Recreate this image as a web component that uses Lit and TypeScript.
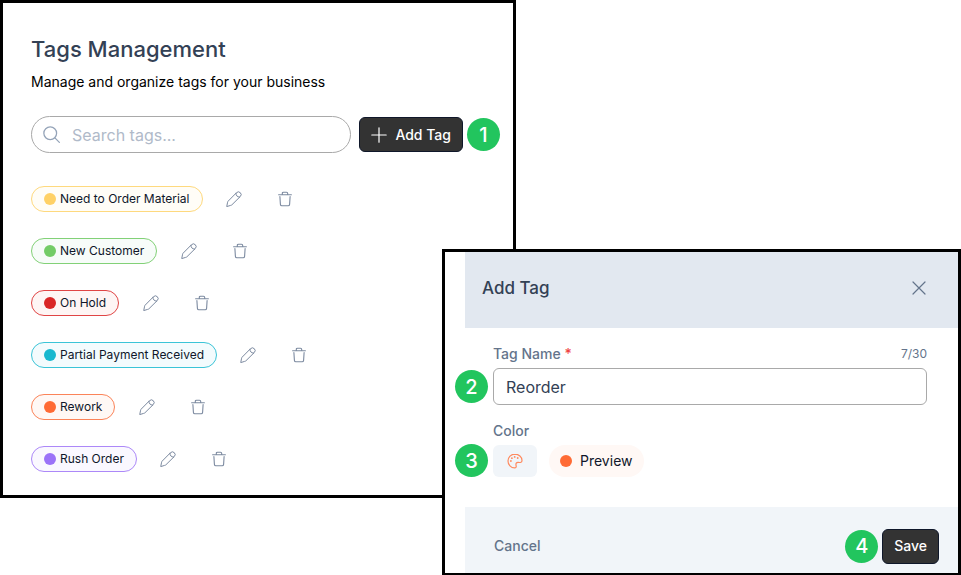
import { LitElement, html, css, svg } from "lit";
import { customElement, state } from "lit/decorators.js";
import { styleMap } from "lit/directives/style-map.js";

interface Tag {
  name: string;
  color: string;
  border: string;
  tint: string;
}

const TAGS: Tag[] = [
  { name: "Need to Order Material", color: "#ffd166", border: "#fed97e", tint: "#fffdf7" },
  { name: "New Customer", color: "#73cc67", border: "#82d177", tint: "#f7fcf9" },
  { name: "On Hold", color: "#d92626", border: "#e04545", tint: "#fef5f4" },
  { name: "Partial Payment Received", color: "#17b8cf", border: "#3bc4d7", tint: "#f3fbfd" },
  { name: "Rework", color: "#ff6b35", border: "#fb8358", tint: "#fff8f5" },
  { name: "Rush Order", color: "#9b72f8", border: "#ac88f8", tint: "#faf8ff" },
];

const icon = (size: number, body: unknown) => html`
  <svg width=${size} height=${size} viewBox="0 0 16 16" fill="none" stroke="currentColor"
    stroke-width="1.2" stroke-linecap="round" stroke-linejoin="round" aria-hidden="true">${body}</svg>`;

const pencil = svg`<g stroke-width="1"><path d="M.8 15.200 1.600 11.200Q1.700 10.600 2.200 10.100L10.500 1.700A2.600 2.600 0 0 1 14.300 5.500L5.900 13.800Q5.400 14.300 4.800 14.400z"/><path d="M10 2.200Q9.600 5.900 13.700 6.100"/></g>`;
const trash = svg`<g stroke-width="1.1"><path d="M1.600 3.700h12.800M5.300 3.500V2.400q0-1.200 1.200-1.200h3q1.200 0 1.200 1.200v1.100M2.900 5.500l.5 7.900q.1 1.400 1.500 1.400h6.200q1.400 0 1.500-1.400l.5-7.900"/></g>`;
const search = svg`<circle cx="6.800" cy="6.800" r="6"/><path d="m11.200 11.200 4.200 4.200"/>`;
const plus = svg`<path d="M8 .8v14.400M.8 8h14.400"/>`;
const cross = svg`<path d="m2 2 12 12M14 2 2 14"/>`;
const palette = svg`<path d="M8 1.200C4 1.200 1 4.200 1 8s3 6.900 6.600 6.900c1.500 0 1.800-1 1.500-2.200-.5-2.200.2-3.500 2.200-3.300 2.200.3 3.700 0 3.700-1.900 0-3.600-3.200-6.300-7-6.300z"/><g fill="currentColor" stroke="none"><circle cx="3.900" cy="8" r=".9"/><circle cx="4.900" cy="5.200" r=".9"/><circle cx="7.700" cy="3.900" r=".9"/><circle cx="10.700" cy="5" r=".9"/></g>`;

@customElement("app-root")
export class AppRoot extends LitElement {
  @state() private tagName_ = "Reorder";

  static styles = css`
    :host {
      display: grid;
      grid-template-columns: 442fr 74fr 445fr;
      align-items: start;
      background: #fff;
      color: #0f172a;
      font-family: Inter, "Liberation Sans", sans-serif;
      font-size: 14px;
      line-height: 20px;
    }
    * { box-sizing: border-box; }
    button, input { font: inherit; margin: 0; }
    button { border: 0; background: none; padding: 0; cursor: pointer; }
    svg { display: block; flex: none; }
    h1, h2, p, ul { margin: 0; padding: 0; }
    .panel {
      border: 3px solid #000;
      background: #fff;
      min-width: 0;
    }
    .tags {
      grid-area: 1 / 1 / 2 / 3;
      padding: 32px 13px 23px 28px;
    }
    .title { font-size: 22px; line-height: 28px; color: #334155; font-weight: 500; }
    .subtitle { margin-top: 9px; color: #000; }
    .toolbar { display: flex; align-items: center; margin-top: 24px; }
    .search {
      flex: 1;
      min-width: 0;
      display: flex;
      align-items: center;
      gap: 12px;
      height: 37px;
      padding: 0 12px 0 11px;
      margin-right: 8px;
      border: 1px solid #a9a9a9;
      border-radius: 19px;
      color: #94a3b8;
    }
    .search input {
      flex: 1;
      min-width: 0;
      border: 0;
      outline: 0;
      padding: 0;
      background: none;
      font-size: 16px;
      color: #334155;
    }
    .search input::placeholder { color: #b0bac9; opacity: 1; }
    .primary {
      display: flex;
      align-items: center;
      gap: 8px;
      height: 35px;
      padding: 0 11px;
      border: 1px solid #0f172a;
      border-radius: 6px;
      background: #333;
      color: #fff;
      font-weight: 500;
      white-space: nowrap;
    }
    .badge {
      flex: none;
      display: flex;
      align-items: center;
      justify-content: center;
      width: 33px;
      height: 33px;
      margin: 0 4px;
      border-radius: 50%;
      background: #22c55e;
      color: #fff;
      font-size: 20px;
      font-weight: 500;
    }
    .toolbar .badge { margin-right: 0; }
    .list { list-style: none; display: grid; gap: 26px; margin-top: 33px; }
    .row { display: flex; align-items: center; gap: 12px; height: 26px; }
    .chip {
      display: flex;
      align-items: center;
      gap: 4px;
      height: 26px;
      padding: 0 12px;
      border: 1px solid;
      border-radius: 13px;
      font-size: 12px;
      white-space: nowrap;
    }
    .dot { width: 12px; height: 12px; border-radius: 50%; background: #ff6b35; }
    .actions { display: flex; gap: 12px; }
    .icon-button {
      display: flex;
      align-items: center;
      justify-content: center;
      width: 39px;
      height: 26px;
      color: #7c8aa0;
    }
    .dialog {
      grid-area: 1 / 2 / 2 / 4;
      margin-top: 249px;
    }
    .header {
      display: flex;
      align-items: center;
      justify-content: space-between;
      height: 76px;
      margin-left: 20px;
      padding: 0 30px 4px 17px;
      background: #e2e8f0;
    }
    .header h2 { font-size: 17px; line-height: 24px; color: #334155; font-weight: 500; }
    .close { width: 18px; height: 18px; display: grid; place-items: center; color: #64748b; }
    .form { padding: 16px 31px 30px 6px; }
    .label-row { display: flex; justify-content: space-between; padding-left: 42px; }
    .label { color: #64748b; font-weight: 500; }
    .required { color: #ef4444; }
    .count { font-size: 12px; color: #64748b; }
    .field { display: flex; align-items: center; }
    .field .badge { margin-right: 5px; }
    .name-field { margin-top: 4px; }
    .name {
      flex: 1;
      min-width: 0;
      height: 37px;
      padding: 0 12px;
      border: 1px solid #a9a9a9;
      border-radius: 6px;
      outline: 0;
      background: #fff;
      font-size: 16px;
      color: #334155;
    }
    .color-row { margin-top: 16px; }
    .color-field { margin-top: 3px; }
    .swatch {
      display: grid;
      place-items: center;
      width: 44px;
      height: 32px;
      border-radius: 6px;
      background: #f1f5f9;
      color: #ff8a5f;
    }
    .preview {
      display: flex;
      align-items: center;
      gap: 8px;
      height: 32px;
      margin-left: 12px;
      padding: 0 11px;
      border-radius: 16px;
      background: #fff8f5;
    }
    .footer {
      display: flex;
      align-items: center;
      height: 66px;
      margin-left: 20px;
      padding: 12px 19px 0 29px;
      background: #f1f5f9;
    }
    .cancel { margin-right: auto; color: #64748b; font-weight: 500; }
  `;

  private onInput(e: Event) {
    this.tagName_ = (e.target as HTMLInputElement).value;
  }

  render() {
    return html`
      <main class="panel tags">
        <h1 class="title">Tags Management</h1>
        <p class="subtitle">Manage and organize tags for your business</p>
        <div class="toolbar">
          <label class="search">
            ${icon(17, search)}
            <input type="search" placeholder="Search tags..." aria-label="Search tags" />
          </label>
          <button class="primary">${icon(16, plus)}Add Tag</button>
          <span class="badge">1</span>
        </div>
        <ul class="list">
          ${TAGS.map((t) => html`
            <li class="row">
              <span class="chip" style=${styleMap({ borderColor: t.border, background: t.tint })}>
                <span class="dot" style=${styleMap({ background: t.color })}></span>${t.name}
              </span>
              <span class="actions">
                <button class="icon-button" aria-label="Edit ${t.name}">${icon(16, pencil)}</button>
                <button class="icon-button" aria-label="Delete ${t.name}">${icon(16, trash)}</button>
              </span>
            </li>`)}
        </ul>
      </main>
      <section class="panel dialog" role="dialog" aria-labelledby="dialog-title">
        <header class="header">
          <h2 id="dialog-title">Add Tag</h2>
          <button class="close" aria-label="Close">${icon(16, cross)}</button>
        </header>
        <div class="form">
          <div class="label-row">
            <label class="label" for="name">Tag Name <span class="required">*</span></label>
            <span class="count">${this.tagName_.length}/30</span>
          </div>
          <div class="field name-field">
            <span class="badge">2</span>
            <input class="name" id="name" type="text" maxlength="30" .value=${this.tagName_} @input=${this.onInput} />
          </div>
          <div class="label-row color-row">
            <label class="label" for="color">Color</label>
          </div>
          <div class="field color-field">
            <span class="badge">3</span>
            <button class="swatch" id="color">${icon(16, palette)}</button>
            <span class="preview"><span class="dot"></span>Preview</span>
          </div>
        </div>
        <footer class="footer">
          <button class="cancel">Cancel</button>
          <span class="badge">4</span>
          <button class="primary">Save</button>
        </footer>
      </section>
    `;
  }
}
